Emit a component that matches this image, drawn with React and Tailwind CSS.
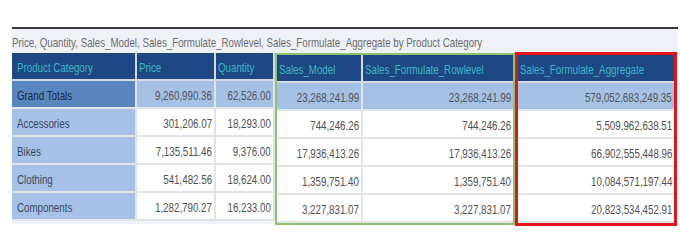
import React from "react";

const rows = [
  ["Accessories", "301,206.07", "18,293.00", "744,246.26", "744,246.26", "5,509,962,638.51"],
  ["Bikes", "7,135,511.46", "9,376.00", "17,936,413.26", "17,936,413.26", "66,902,555,448.96"],
  ["Clothing", "541,482.56", "18,624.00", "1,359,751.40", "1,359,751.40", "10,084,571,197.44"],
  ["Components", "1,282,790.27", "16,233.00", "3,227,831.07", "3,227,831.07", "20,823,534,452.91"],
];
const grand = ["Grand Totals", "9,260,990.36", "62,526.00", "23,268,241.99", "23,268,241.99", "579,052,683,249.35"];

const font = { fontFamily: '"Liberation Sans", Arial, sans-serif' };

function T({ right, children }) {
  return (
    <span className={`inline-block whitespace-nowrap scale-x-[0.75] ${right ? "origin-right" : "origin-left"}`}>
      {children}
    </span>
  );
}

function HeadCell({ w, last, cat, children }) {
  return (
    <div className={`${w} h-[28px] flex items-center pt-[3px] ${cat ? "pl-[5px]" : "pl-[2px]"} bg-[#1d4884] text-[#3fb4c8] ${last ? "" : "border-r-2"} border-b-2 border-[#d3dae3] shrink-0`}>
      <T>{children}</T>
    </div>
  );
}

function Cell({ w, children, grand: g, cat, last }) {
  let bg = "bg-white text-[#505050]";
  if (g && cat) bg = "bg-[#5a86bf] text-[#1b283a]";
  else if (g) bg = "bg-[#a4c0e3] text-[#50555d]";
  else if (cat) bg = "bg-[#a5c2e6] text-[#384a62]";
  return (
    <div className={`${w} h-[28px] flex items-center pt-[3px] ${cat ? "justify-start pl-[5px]" : "justify-end pr-[2px]"} ${bg} ${last ? "" : "border-r-2"} border-b-2 border-[#e0e3e8] shrink-0`}>
      <T right={!cat}>{children}</T>
    </div>
  );
}

function Column({ w, head, idx, last }) {
  const cat = idx === 0;
  return (
    <div className="flex flex-col">
      <HeadCell w={w} last={last} cat={cat}>{head}</HeadCell>
      <Cell w={w} grand cat={cat} last={last}>{grand[idx]}</Cell>
      {rows.map((r, i) => (
        <Cell key={i} w={w} cat={cat} last={last}>{r[idx]}</Cell>
      ))}
    </div>
  );
}

export default function App() {
  return (
    <div className="w-[680px] h-[244px] bg-white overflow-hidden text-[13px]" style={font}>
      <div className="pt-[27px] pl-[12px]">
        <div className="h-[2px] w-[666px] bg-[#3a3a3a]" />
        <div className="w-[666px] h-[24px] bg-[#eef1f6] text-[#6e6e6e] flex items-center pt-[4px]">
          <T>Price, Quantity, Sales_Model, Sales_Formulate_Rowlevel, Sales_Formulate_Aggregate by Product Category</T>
        </div>
        <div className="flex items-start">
          <div className="flex flex-col">
            <div className="flex">
              <Column w="w-[125px]" head="Product Category" idx={0} />
              <Column w="w-[79px]" head="Price" idx={1} />
              <Column w="w-[59px]" head="Quantity" idx={2} />
            </div>
            <div className="h-[3px] bg-[#eef1f6]" />
          </div>
          <div className="flex border-2 border-[#8cc46b]">
            <Column w="w-[86px]" head="Sales_Model" idx={3} />
            <Column w="w-[150px]" head="Sales_Formulate_Rowlevel" idx={4} last />
          </div>
          <div className="flex border-[3px] border-[#e8121a] -mt-px">
            <Column w="w-[156px]" head="Sales_Formulate_Aggregate" idx={5} last />
          </div>
        </div>
      </div>
    </div>
  );
}
